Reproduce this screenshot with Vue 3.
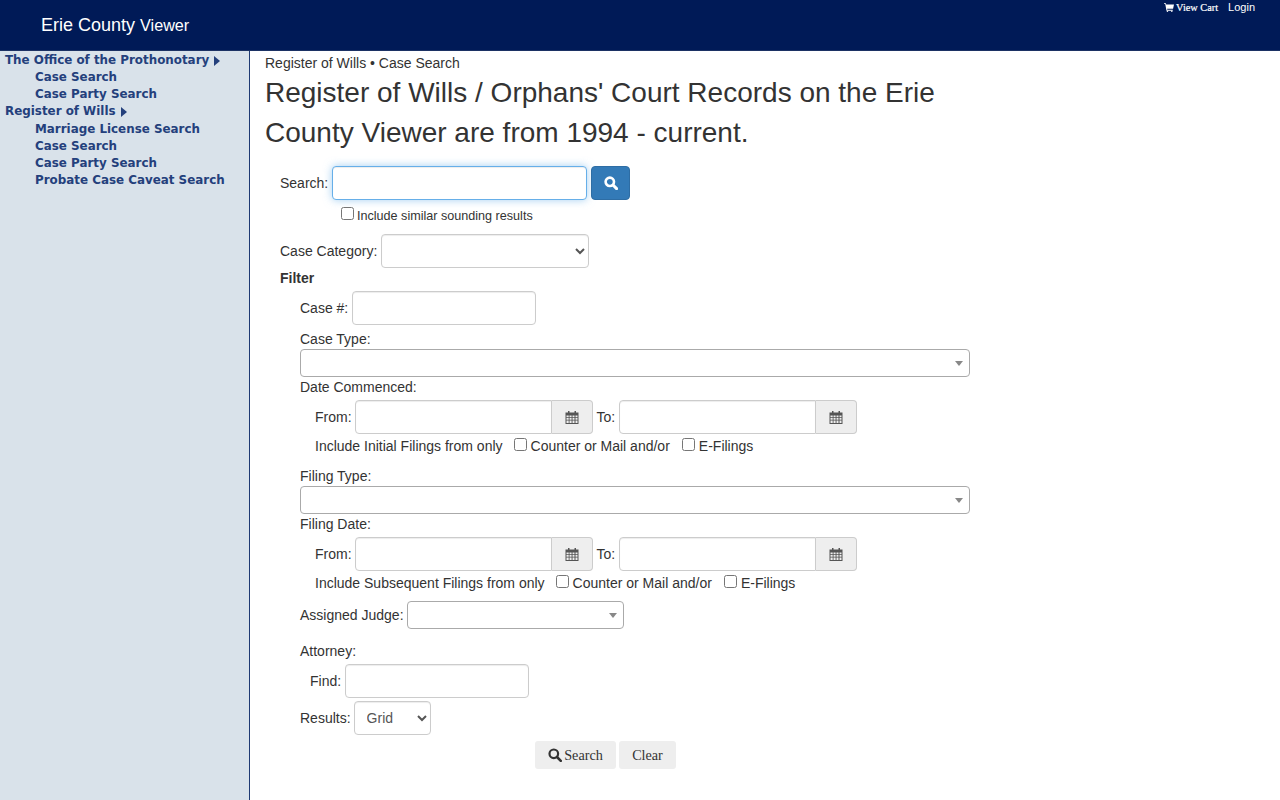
<script setup>
const sideMenu = [
  { title: 'The Office of the Prothonotary', items: ['Case Search', 'Case Party Search'] },
  { title: 'Register of Wills', items: ['Marriage License Search', 'Case Search', 'Case Party Search', 'Probate Case Caveat Search'] },
]
const dateGroups = [
  { typeLabel: 'Case Type:', dateLabel: 'Date Commenced:', include: 'Include Initial Filings from only' },
  { typeLabel: 'Filing Type:', dateLabel: 'Filing Date:', include: 'Include Subsequent Filings from only' },
]
</script>

<template>
  <div class="page">
    <header class="topbar">
      <div class="brand"><span class="brand-main">Erie County</span> <span class="brand-sub">Viewer</span></div>
      <nav class="toplinks">
        <a class="cart">
          <svg class="cart-icon" viewBox="0 0 16 14" width="10" height="9"><path fill="#fff" d="M0 0h3l.5 2H16l-1.5 7H5l.3 1.5H14V12H4L2 1.5H0z"/><circle cx="5.5" cy="13" r="1.2" fill="#fff"/><circle cx="12.5" cy="13" r="1.2" fill="#fff"/></svg>
          View Cart
        </a>
        <a class="login">Login</a>
      </nav>
    </header>
    <div class="body">
      <aside class="sidebar">
        <div v-for="group in sideMenu" :key="group.title" class="side-group">
          <div class="side-title">{{ group.title }}<svg class="caret" viewBox="0 0 6 10" width="6" height="10"><path d="M0 0l6 5-6 5z" fill="#24407c"/></svg></div>
          <div v-for="item in group.items" :key="item" class="side-item">{{ item }}</div>
        </div>
      </aside>
      <main class="main">
        <div class="crumb">Register of Wills • Case Search</div>
        <h1 class="heading">Register of Wills / Orphans' Court Records on the Erie County Viewer are from 1994 - current.</h1>
        <form class="form" @submit.prevent>
          <div class="row search-row">
            <label>Search:</label>
            <input class="input search-input" type="text" />
            <button class="search-btn" type="button" aria-label="Search">
              <svg viewBox="0 0 14 14" width="14" height="14"><circle cx="5.8" cy="5.8" r="4.2" fill="none" stroke="#fff" stroke-width="2.6"/><path d="M9 9l3.6 3.6" stroke="#fff" stroke-width="3" stroke-linecap="round"/></svg>
            </button>
          </div>
          <div class="similar"><input type="checkbox" class="check" /><span>Include similar sounding results</span></div>
          <div class="row category-row">
            <label>Case Category:</label>
            <select class="input category-select"><option></option></select>
          </div>
          <div class="filter-title">Filter</div>
          <div class="filter">
            <div class="row">
              <label>Case #:</label>
              <input class="input case-input" type="text" />
            </div>
            <div v-for="(g, i) in dateGroups" :key="g.typeLabel" class="date-group" :class="{ second: i === 1 }">
              <div class="line-label">{{ g.typeLabel }}</div>
              <div class="combo wide"><span class="combo-arrow"></span></div>
              <div class="line-label">{{ g.dateLabel }}</div>
              <div class="indent">
                <div class="row date-row">
                  <label>From:</label>
                  <div class="date-field">
                    <input class="input date-input" type="text" />
                    <span class="addon"><svg viewBox="0 0 14 15" width="14" height="15"><path fill="#555" fill-rule="evenodd" d="M.5 2.500h2.500V1h1.500v1.500h5V1H11v1.500h2.500V14H.5zM1.500 5.500v1.700h2.200V5.500zm3 0v1.700h2.100V5.500zm3 0v1.700h2V5.500zm3 0v1.700h2V5.500zM1.500 8v1.700h2.200V8zm3 0v1.700h2.100V8zm3 0v1.700h2V8zm3 0v1.700h2V8zM1.500 10.500V13h2.200v-2.500zm3 0V13h2.100v-2.500zm3 0V13h2v-2.500zm3 0V13h2v-2.500z"/></svg></span>
                  </div>
                  <label class="to">To:</label>
                  <div class="date-field">
                    <input class="input date-input" type="text" />
                    <span class="addon"><svg viewBox="0 0 14 15" width="14" height="15"><path fill="#555" fill-rule="evenodd" d="M.5 2.500h2.500V1h1.500v1.500h5V1H11v1.500h2.500V14H.5zM1.500 5.500v1.700h2.200V5.500zm3 0v1.700h2.100V5.500zm3 0v1.700h2V5.500zm3 0v1.700h2V5.500zM1.500 8v1.700h2.200V8zm3 0v1.700h2.100V8zm3 0v1.700h2V8zm3 0v1.700h2V8zM1.500 10.500V13h2.200v-2.500zm3 0V13h2.100v-2.500zm3 0V13h2v-2.500zm3 0V13h2v-2.500z"/></svg></span>
                  </div>
                </div>
                <div class="include">
                  <span class="include-text">{{ g.include }}</span>
                  <input type="checkbox" class="check" /><span class="opt">Counter or Mail and/or</span>
                  <input type="checkbox" class="check" /><span>E-Filings</span>
                </div>
              </div>
            </div>
            <div class="row judge-row">
              <label>Assigned Judge:</label>
              <div class="combo judge"><span class="combo-arrow"></span></div>
            </div>
            <div class="line-label attorney">Attorney:</div>
            <div class="row find-row">
              <label>Find:</label>
              <input class="input case-input" type="text" />
            </div>
            <div class="row results-row">
              <label>Results:</label>
              <select class="input results-select"><option>Grid</option></select>
            </div>
            <div class="actions">
              <button class="btn btn-search" type="button">
                <svg viewBox="0 0 14 14" width="14" height="14"><circle cx="5.8" cy="5.800" r="4.300" fill="none" stroke="#333" stroke-width="2.200"/><path d="M9 9l3.800 3.800" stroke="#333" stroke-width="2.600" stroke-linecap="round"/></svg>
                Search
              </button>
              <button class="btn btn-clear" type="button">Clear</button>
            </div>
          </div>
        </form>
      </main>
    </div>
  </div>
</template>

<style>
html, body { margin: 0; background: #fff; }
</style>

<style scoped>
.page { height: 800px; overflow: hidden; display: flex; flex-direction: column; font-family: "Liberation Sans", Arial, sans-serif; font-size: 14px; color: #333; }
.topbar { height: 50px; flex: none; background: #001a57; border-bottom: 1px solid #1c3264; display: flex; justify-content: space-between; color: #fff; }
.brand { padding: 15px 0 0 41px; line-height: 20px; font-size: 18px; }
.brand-sub { font-size: 16.2px; }
.toplinks { display: flex; padding: 0 25px 0 0; gap: 10px; font-size: 11px; line-height: 14px; }
.cart { font-family: "Liberation Serif", serif; font-size: 10.3px; line-height: 15px; -webkit-text-stroke: .2px #fff; }
.cart-icon { vertical-align: -1px; margin-right: 0; }
.body { flex: 1; display: flex; min-height: 0; }
.sidebar { width: 249px; flex: none; background: #d9e2ea; border-right: 1px solid #1f3a73; padding-top: 1px; font-family: "DejaVu Sans", Verdana, sans-serif; font-weight: 700; font-size: 11.9px; color: #24407c; }
.side-title { padding-left: 5px; line-height: 17px; height: 17px; }
.side-group:last-child .side-title { margin-bottom: 1px; }
.caret { margin-left: 5px; vertical-align: -2px; }
.side-item { padding-left: 35px; line-height: 17px; height: 17px; }
.main { flex: 1; padding: 2px 0 0 15px; }
.crumb { line-height: 20px; }
.heading { width: 705px; margin: 0; font-weight: 400; font-size: 28px; line-height: 40px; }
.form { padding-left: 15px; margin-top: 13px; }
.row { display: flex; align-items: center; }
.row label { margin-right: 4px; }
.input { box-sizing: border-box; height: 34px; border: 1px solid #ccc; border-radius: 4px; background: #fff; font: inherit; color: #555; padding: 6px 12px; box-shadow: inset 0 1px 1px rgba(0,0,0,.075); outline: none; }
select.input { padding: 6px 8px; }
.search-input { width: 255px; border-color: #66afe9; box-shadow: inset 0 1px 1px rgba(0,0,0,.075), 0 0 8px rgba(102,175,233,.6); }
.search-btn { width: 39px; height: 34px; margin-left: 4px; border: 1px solid #2e6da4; border-radius: 4px; background: #337ab7; display: flex; align-items: center; justify-content: center; padding: 0; }
.similar { display: flex; align-items: center; margin-left: 61px; margin-top: 6px; height: 20px; font-size: 12.6px; }
.check { width: 13px; height: 13px; margin: 0 3px 4px 0; flex: none; }
.similar .check { margin-bottom: 6px; }
.category-row { margin-top: 8px; }
.category-select { width: 208px; }
.filter-title { font-weight: 700; line-height: 20px; }
.filter { padding-left: 20px; margin-top: 3px; }
.case-input { width: 184px; }
.line-label { line-height: 20px; }
.date-group { margin-top: 4px; }
.date-group.second { margin-top: 10px; }
.combo { position: relative; box-sizing: border-box; height: 28px; border: 1px solid #aaa; border-radius: 4px; background: #fff; }
.combo.wide { width: 670px; }
.combo.judge { width: 217px; }
.combo-arrow { position: absolute; right: 6px; top: 11px; width: 0; height: 0; border-left: 4px solid transparent; border-right: 4px solid transparent; border-top: 5px solid #888; }
.indent { padding-left: 15px; margin-top: 3px; }
.date-row label, .judge-row label, .results-row label { margin-right: 3px; }
.date-row .to { margin-left: 4px; margin-right: 4px; }
.date-field { display: flex; }
.date-input { width: 197px; border-radius: 4px 0 0 4px; }
.addon { box-sizing: border-box; width: 41px; height: 34px; background: #eee; border: 1px solid #ccc; border-left: 0; border-radius: 0 4px 4px 0; display: flex; align-items: center; justify-content: center; }
.include { display: flex; align-items: center; height: 20px; margin-top: 2px; }
.include .check { margin-right: 4px; }
.include-text { margin-right: 11px; }
.opt { margin-right: 12px; }
.judge-row { margin-top: 8px; }
.attorney { margin-top: 12px; }
.find-row { margin: 3px 0 0 10px; }
.results-row { margin-top: 3px; }
.results-select { width: 77px; }
select.results-select { padding: 6px 8px; }
.actions { display: flex; gap: 3px; margin: 6px 0 0 235px; }
.btn { box-sizing: border-box; height: 28px; border: 0; border-radius: 3px; background: #eee; color: #333; font-family: "Liberation Serif", serif; font-size: 14.2px; padding: 0; display: flex; align-items: center; justify-content: center; gap: 2px; }
.btn-search { width: 81px; }
.btn-clear { width: 57px; }
</style>
